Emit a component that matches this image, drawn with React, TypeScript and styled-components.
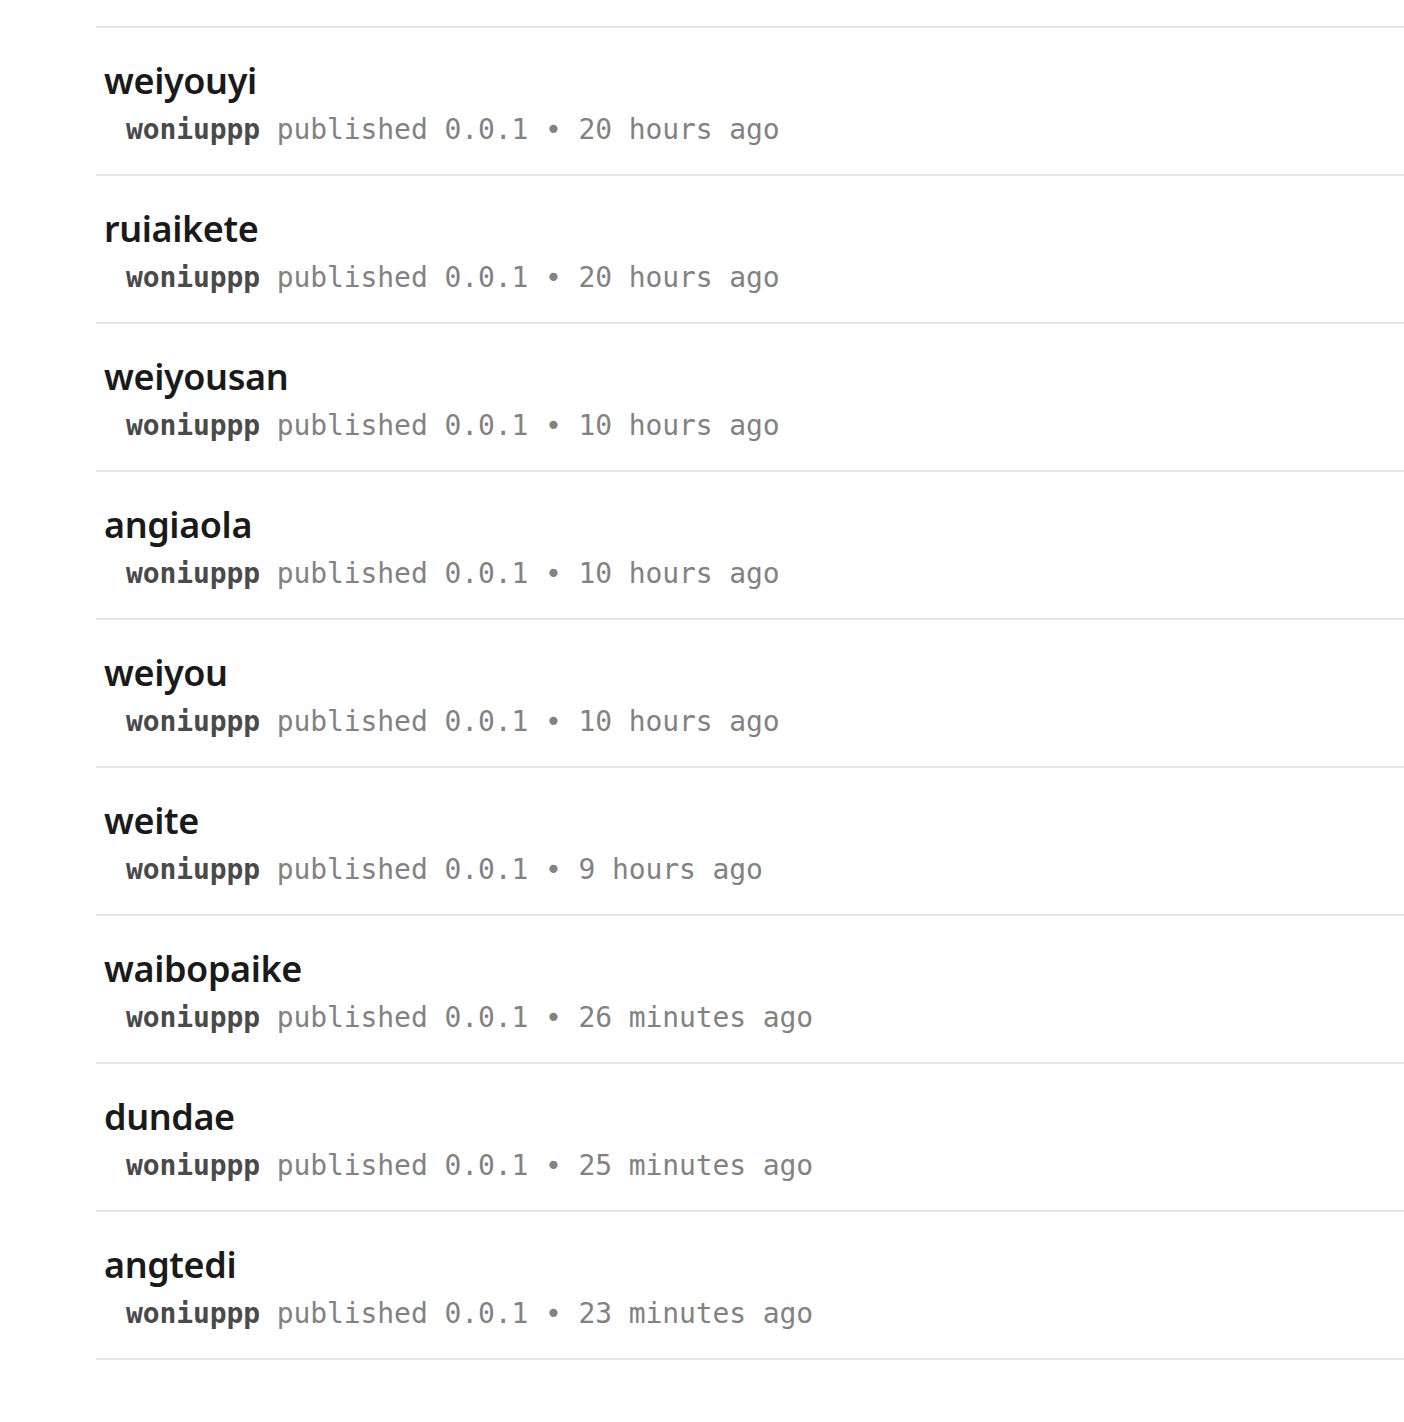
import React from 'react';
import styled, { createGlobalStyle } from 'styled-components';

const GlobalStyle = createGlobalStyle`
  html, body {
    margin: 0;
    padding: 0;
    background: #fff;
  }
  body {
    font-family: "Noto Sans", "Open Sans", sans-serif;
  }
`;

const List = styled.ul`
  list-style: none;
  margin: 26px 0 0 96px;
  padding: 0;
  border-top: 2px solid #e5e5e5;
`;

const Item = styled.li`
  display: flex;
  flex-direction: column;
  height: 148px;
  box-sizing: border-box;
  padding: 31px 0 0 8px;
  border-bottom: 2px solid #e5e5e5;
`;

const Name = styled.a`
  font-family: "Noto Sans", sans-serif;
  font-size: 36px;
  font-weight: 600;
  line-height: 44px;
  color: #1a1a1a;
  text-decoration: none;
  letter-spacing: -0.4px;
`;

const Meta = styled.div`
  margin-top: 5px;
  font-family: "DejaVu Sans Mono", "Liberation Mono", monospace;
  font-size: 28px;
  line-height: 44px;
  color: #828282;
  padding-left: 22px;
  white-space: pre;
  letter-spacing: -0.1px;
`;

const Author = styled.span`
  font-weight: 700;
  color: #4a4a4a;
`;

type Pkg = { name: string; when: string };

const packages: Pkg[] = [
  { name: 'weiyouyi', when: '20 hours ago' },
  { name: 'ruiaikete', when: '20 hours ago' },
  { name: 'weiyousan', when: '10 hours ago' },
  { name: 'angiaola', when: '10 hours ago' },
  { name: 'weiyou', when: '10 hours ago' },
  { name: 'weite', when: '9 hours ago' },
  { name: 'waibopaike', when: '26 minutes ago' },
  { name: 'dundae', when: '25 minutes ago' },
  { name: 'angtedi', when: '23 minutes ago' },
];

export default function App() {
  return (
    <>
      <GlobalStyle />
      <List>
        {packages.map((p) => (
          <Item key={p.name}>
            <Name href="#">{p.name}</Name>
            <Meta>
              <Author>woniuppp</Author>
              {` published 0.0.1 • ${p.when}`}
            </Meta>
          </Item>
        ))}
      </List>
    </>
  );
}
